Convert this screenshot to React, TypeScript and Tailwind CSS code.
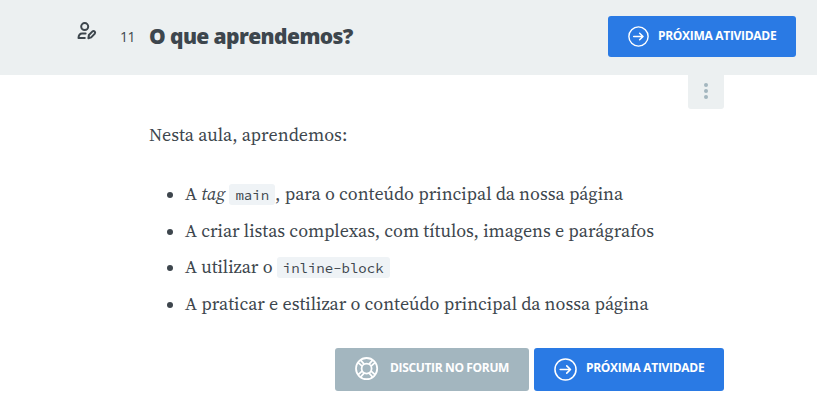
import type { ReactNode } from "react";

function ArrowCircle({ className }: { className: string }) {
  return (
    <svg className={className} viewBox="0 0 24 24" fill="none" stroke="currentColor" strokeWidth="1.6" strokeLinecap="round" strokeLinejoin="round">
      <circle cx="12" cy="12" r="11" />
      <path d="M6.5 12h10.5M13.3 8.2 17.2 12l-3.9 3.8" strokeWidth="1.7" />
    </svg>
  );
}

function Lifebuoy() {
  return (
    <svg className="h-6 w-6 shrink-0" viewBox="0 0 24 24" fill="none" stroke="currentColor" strokeWidth="1.8">
      <circle cx="11.6" cy="11.6" r="10.6" />
      <circle cx="11.6" cy="11.6" r="5" />
      <path d="M7.1 9.1 3.2 5.6M9.1 7.1 5.6 3.2M14.1 7.1l3.5-3.9M16.1 9.1l3.9-3.5M7.1 14.1l-3.9 3.5M9.1 16.1 5.6 20M14.1 16.1l3.5 3.9M16.1 14.1l3.9 3.5" />
    </svg>
  );
}

function UserEdit() {
  return (
    <svg className="h-[18px] w-5" viewBox="0 0 20 18" fill="none" stroke="currentColor" strokeWidth="2" strokeLinejoin="round" strokeLinecap="round">
      <circle cx="7.7" cy="4.6" r="3.5" />
      <path d="M8.6 11.4H5.2C3 11.4 1.6 13.2 1.5 16h6.3" />
      <path d="m11.4 16.2.5-3.2 3.6-3.6c1.6-1 3.3.6 2.3 2.2l-3.6 3.8Z" />
    </svg>
  );
}

function Code({ children }: { children: ReactNode }) {
  return (
    <code className="inline-block h-[21px] rounded-[3px] bg-[#eff3f6] px-1.5 align-baseline font-['Source_Code_Pro','DejaVu_Sans_Mono',monospace] text-[14px] leading-[22px]">
      {children}
    </code>
  );
}

function Item({ children }: { children: ReactNode }) {
  return (
    <li className="flex h-[36.6px] items-center whitespace-pre">
      <span className="mr-3 mt-0.5 h-1.5 w-1.5 shrink-0 rounded-full bg-[#3d464d]" />
      <span className="-mt-px">{children}</span>
    </li>
  );
}

export default function App() {
  return (
    <div className="h-[402px] w-[817px] overflow-hidden bg-white font-['Open_Sans',sans-serif] text-[#3d464d]">
      <header className="flex h-[75px] items-start bg-[#ecf0f1] pl-[77px] pr-[21px]">
        <div className="mt-[22px] w-[43px]"><UserEdit /></div>
        <span className="mt-[27px] w-[29px] text-[14px] leading-5 tracking-[-0.6px]">11</span>
        <h1 className="mt-[21px] flex-1 whitespace-nowrap text-[21px] font-extrabold leading-[30px] tracking-[-0.6px]">
          O que aprendemos?
        </h1>
        <button className="mt-4 flex h-[41px] w-[188px] items-center rounded-[3px] bg-[#2a7ae4] pl-5 text-white">
          <ArrowCircle className="mr-[9px] h-[21px] w-[21px] shrink-0" />
          <span className="-mt-0.5 whitespace-nowrap text-xs font-bold tracking-[-0.3px]">PRÓXIMA ATIVIDADE</span>
        </button>
      </header>
      <main className="ml-[149px] w-[575px]">
        <div className="flex justify-end">
          <button className="flex h-[34px] w-9 flex-col items-center justify-center gap-[2px] rounded-b-[3px] bg-[#ecf0f1] pb-0.5">
            <span className="h-1 w-1 rounded-full bg-[#a3b6bf]" />
            <span className="h-1 w-1 rounded-full bg-[#a3b6bf]" />
            <span className="h-1 w-1 rounded-full bg-[#a3b6bf]" />
          </button>
        </div>
        <div className="font-['Source_Serif_Pro','Source_Serif_4','Liberation_Serif',serif] text-[18px]">
          <p className="mt-[13px] h-[26px] whitespace-nowrap leading-[26px]">Nesta aula, aprendemos:</p>
          <ul className="mt-[28px] pl-[18px]">
            <Item>A <em>tag</em> <Code>main</Code>, para o conteúdo principal da nossa página</Item>
            <Item>A criar listas complexas, com títulos, imagens e parágrafos</Item>
            <Item>A utilizar o <Code>inline-block</Code></Item>
            <Item>A praticar e estilizar o conteúdo principal da nossa página</Item>
          </ul>
        </div>
        <div className="mt-[25.6px] flex justify-end gap-[5px]">
          <button className="flex h-[43px] w-[194px] items-center rounded-[3px] bg-[#a3b6bf] pl-5 text-white">
            <Lifebuoy />
            <span className="-mt-[3px] ml-[11px] whitespace-nowrap text-xs font-bold tracking-[-0.35px]">DISCUTIR NO FORUM</span>
          </button>
          <button className="flex h-[43px] w-[190px] items-center rounded-[3px] bg-[#2a7ae4] pl-5 text-white">
            <ArrowCircle className="h-[23px] w-[23px] shrink-0" />
            <span className="-mt-[3px] ml-[9px] whitespace-nowrap text-xs font-bold tracking-[-0.3px]">PRÓXIMA ATIVIDADE</span>
          </button>
        </div>
      </main>
    </div>
  );
}
